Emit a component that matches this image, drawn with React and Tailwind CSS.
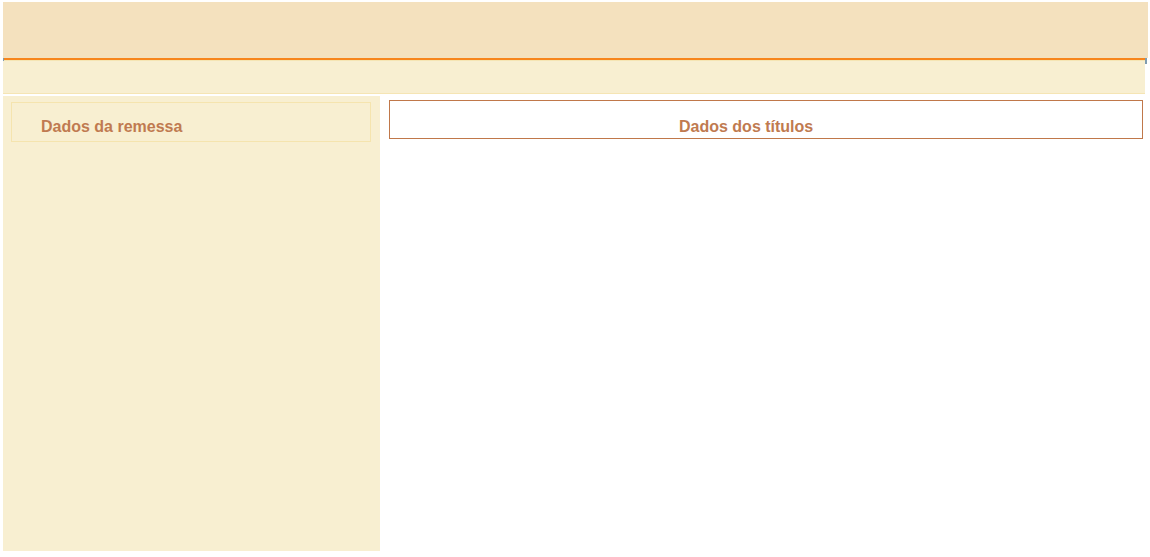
export default function App() {
  return (
    <div className="w-[1150px] h-[557px] bg-white pt-[2px] pl-[3px] font-['Liberation_Sans',Arial,sans-serif] overflow-hidden">
      {/* Header */}
      <div className="w-[1145px] h-[56px] bg-[#f4e1be]" />
      <div className="relative w-[1142px] h-[2px] bg-[#f7851c]">
        <div className="absolute left-0 top-0 w-[1px] h-[3px] bg-[#7f9cb0]" />
        <div className="absolute -right-[2px] top-0 w-[2px] h-[6px] bg-[#7f9cb0]" />
      </div>
      {/* Sub bar */}
      <div className="w-[1142px] h-[34px] bg-[#f8efd1] border-t border-b border-[#f5e5b4]" />

      <div className="flex mt-[2px] h-[455px]">
        {/* Left panel */}
        <div className="w-[377px] bg-[#f8efd1] pt-[6px] pl-[8px] pr-[9px]">
          <div className="h-[40px] border border-[#f5e4ae] pl-[29px] pt-[12px]">
            <span className="text-[16px] font-bold text-[#c07a50]">Dados da remessa</span>
          </div>
        </div>
        {/* Right panel */}
        <div className="pl-[9px] pt-[4px]">
          <div className="w-[754px] h-[39px] border border-[#c0784a] pt-[14px] pl-[289px]">
            <span className="text-[16px] font-bold text-[#c07a50]">Dados dos títulos</span>
          </div>
        </div>
      </div>
    </div>
  );
}
